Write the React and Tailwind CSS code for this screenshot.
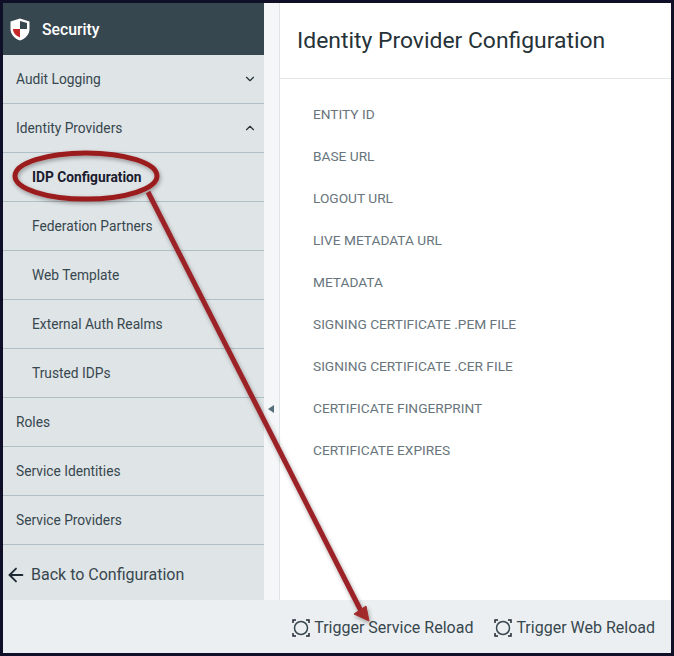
import React from 'react';
import { ArrowLeft, ChevronDown, ChevronUp } from 'lucide-react';

const fields = [
  'ENTITY ID',
  'BASE URL',
  'LOGOUT URL',
  'LIVE METADATA URL',
  'METADATA',
  'SIGNING CERTIFICATE .PEM FILE',
  'SIGNING CERTIFICATE .CER FILE',
  'CERTIFICATE FINGERPRINT',
  'CERTIFICATE EXPIRES',
];

function NavRow({ label, sub, bold, icon }) {
  return (
    <div className={`h-[49px] shrink-0 flex items-center justify-between border-b border-[#b0bec5] pr-[7px] text-[13.75px] ${sub ? 'pl-[29px]' : 'pl-[13px]'} ${bold ? 'font-bold text-[#1a1a2e]' : 'text-[#37474f]'}`}>
      <span>{label}</span>
      {icon}
    </div>
  );
}

function ReloadIcon() {
  return (
    <svg width="18" height="18" viewBox="0 0 18 18" fill="none" className="shrink-0">
      <circle cx="9" cy="9" r="6.500" stroke="#37474f" strokeWidth="1.500" />
      <path d="M1 4V1H4M14 1H17V4M17 14V17H14M4 17H1V14" stroke="#1f2933" strokeWidth="1.500" />
    </svg>
  );
}

function ShieldIcon() {
  return (
    <svg width="20" height="23" viewBox="0 0 20 23">
      <path d="M10 .5 19.500 3.500V11C19.500 16.500 15.500 20.500 10 22.500C4.500 20.500.5 16.500.5 11V3.500Z" fill="#fff" />
      <path d="M10 3 17 5V11H10Z" fill="#37474f" />
      <path d="M10 11V19.500C6 18 3 15 3 11Z" fill="#c62828" />
    </svg>
  );
}

export default function App() {
  return (
    <div className="relative w-[674px] h-[656px] bg-white border-[3px] border-[#0f1028] flex flex-col overflow-hidden font-['Roboto',sans-serif]">
      <div className="flex flex-1 min-h-0">
        {/* Sidebar */}
        <div className="w-[261px] shrink-0 bg-[#dfe4e6] flex flex-col">
          <div className="h-[52px] shrink-0 bg-[#37474f] flex items-center gap-[12px] pl-[7px] pt-[1px] text-white text-[15.750px] font-medium">
            <ShieldIcon />
            <span>Security</span>
          </div>
          <NavRow label="Audit Logging" icon={<ChevronDown size={14} color="#263238" strokeWidth={2} />} />
          <NavRow label="Identity Providers" icon={<ChevronUp size={14} color="#263238" strokeWidth={2} />} />
          <NavRow label="IDP Configuration" sub bold />
          <NavRow label="Federation Partners" sub />
          <NavRow label="Web Template" sub />
          <NavRow label="External Auth Realms" sub />
          <NavRow label="Trusted IDPs" sub />
          <NavRow label="Roles" />
          <NavRow label="Service Identities" />
          <NavRow label="Service Providers" />
          <div className="flex-1 flex items-center gap-[4px] pl-[2px] pt-[4px] text-[16px] text-[#37474f]">
            <ArrowLeft size={22} color="#1f2933" strokeWidth={2} />
            <span>Back to Configuration</span>
          </div>
        </div>

        {/* Collapse gutter */}
        <div className="w-[16px] shrink-0 bg-[#f4f6f8] border-r border-[#dfe4e6] pl-[4px] pt-[402px]">
          <div className="w-0 h-0 border-y-[4px] border-y-transparent border-r-[6px] border-r-[#546e7a]" />
        </div>

        {/* Main panel */}
        <div className="flex-1 min-w-0 flex flex-col bg-white">
          <div className="h-[76px] shrink-0 flex items-center pl-[17px] pt-[2px] border-b border-[#e3e7e9] text-[22.900px] text-[#263238]">
            Identity Provider Configuration
          </div>
          <div className="flex flex-col gap-[24px] pl-[33px] pt-[26px] text-[13.700px] leading-[18px] text-[#68757c]">
            {fields.map((f) => (
              <div key={f}>{f}</div>
            ))}
          </div>
        </div>
      </div>

      {/* Footer */}
      <div className="h-[53px] shrink-0 bg-[#eceff1] flex items-center justify-end gap-[21px] pr-[16px] pt-[3px] text-[16px] text-[#37474f]">
        <div className="flex items-center gap-[4px]">
          <ReloadIcon />
          <span>Trigger Service Reload</span>
        </div>
        <div className="flex items-center gap-[4px]">
          <ReloadIcon />
          <span>Trigger Web Reload</span>
        </div>
      </div>

      {/* Red callout drawn over the page */}
      <svg className="absolute left-[-3px] top-[-3px] pointer-events-none" width="674" height="656" viewBox="0 0 674 656" fill="none">
        <defs>
          <filter id="callout-shadow" x="-10%" y="-10%" width="120%" height="120%">
            <feDropShadow dx="1" dy="2" stdDeviation="2" floodColor="#000" floodOpacity="0.35" />
          </filter>
        </defs>
        <g filter="url(#callout-shadow)">
          <ellipse cx="86" cy="176" rx="71" ry="23" stroke="#9b1c1f" strokeWidth="5" />
          <path d="M148 192 361 611" stroke="#9b2226" strokeWidth="5" />
          <path d="M369 621 354 614 366 606Z" fill="#a32a2a" stroke="#a32a2a" strokeWidth="1" />
        </g>
      </svg>
    </div>
  );
}
